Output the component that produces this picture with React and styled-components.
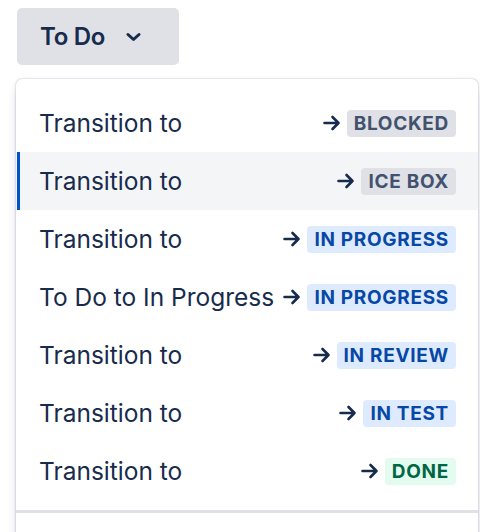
import styled, { createGlobalStyle } from "styled-components";

const GlobalStyle = createGlobalStyle`
  body {
    margin: 0;
    background: #ffffff;
    font-family: Inter, "Noto Sans", sans-serif;
    color: #172B4D;
    overflow: hidden;
  }
`

const Page = styled.div`
  padding: 8px 0 0 17px;
  height: 532px;
  box-sizing: border-box;
`

const StatusButton = styled.button`
  display: flex;
  align-items: center;
  width: 162px;
  height: 57px;
  padding: 0 0 0 23px;
  border: none;
  border-radius: 5px;
  background: #DFE1E6;
  color: #172B4D;
  font-family: inherit;
  font-size: 24px;
  font-weight: 600;
  letter-spacing: -0.3px;
  cursor: pointer;

  & svg {
    margin-left: 21px;
  }
`

const Menu = styled.div`
  margin: 14px 0 0 -1px;
  width: 462px;
  background: #ffffff;
  border-radius: 6px;
  box-shadow: 0 6px 12px -3px rgba(9, 30, 66, 0.25), 0 0 2px rgba(9, 30, 66, 0.35);
  padding-top: 15px;
  height: 460px;
`

const Row = styled.div`
  display: flex;
  align-items: center;
  justify-content: space-between;
  height: 58px;
  padding: 0 22px 0 23px;
  position: relative;
  background: ${(p) => (p.$active ? "#F4F5F7" : "transparent")};

  &::before {
    content: "";
    position: absolute;
    left: 1px;
    top: 0;
    bottom: 0;
    width: 3px;
    background: ${(p) => (p.$active ? "#0052CC" : "transparent")};
  }
`

const Label = styled.span`
  font-size: 24.5px;
  white-space: nowrap;
`

const Target = styled.span`
  display: flex;
  align-items: center;
  gap: 6px;
`

const Lozenge = styled.span`
  display: inline-flex;
  align-items: center;
  height: 27px;
  padding: 0 7px;
  border-radius: 4px;
  font-size: 19px;
  font-weight: 700;
  letter-spacing: 0.7px;
  text-transform: uppercase;
  background: ${(p) => p.$bg};
  color: ${(p) => p.$fg};
`

const Divider = styled.div`
  height: 3px;
  background: #DFE1E6;
  margin-top: 10px;
`

const tones = {
  grey: { bg: "#DFE1E6", fg: "#42526E" },
  blue: { bg: "#DEEBFF", fg: "#0747A6" },
  green: { bg: "#E3FCEF", fg: "#006644" },
}

const transitions = [
  { label: "Transition to", status: "Blocked", tone: "grey" },
  { label: "Transition to", status: "Ice box", tone: "grey", active: true },
  { label: "Transition to", status: "In progress", tone: "blue" },
  { label: "To Do to In Progress", status: "In progress", tone: "blue" },
  { label: "Transition to", status: "In review", tone: "blue" },
  { label: "Transition to", status: "In test", tone: "blue" },
  { label: "Transition to", status: "Done", tone: "green" },
]

function Arrow() {
  return (
    <svg width="18" height="16" viewBox="0 0 18 16" fill="none">
      <path d="M1.5 8h14M9.5 2l6 6-6 6" stroke="#172B4D" strokeWidth="2.6" strokeLinecap="round" strokeLinejoin="round" />
    </svg>
  )
}

function Chevron() {
  return (
    <svg width="15" height="10" viewBox="0 0 15 10" fill="none">
      <path d="M2 2.5l5.5 5 5.5-5" stroke="#172B4D" strokeWidth="3" strokeLinecap="round" strokeLinejoin="round" />
    </svg>
  )
}

export default function App() {
  return (
    <Page>
      <GlobalStyle />
      <StatusButton>
        To Do
        <Chevron />
      </StatusButton>
      <Menu>
        {transitions.map((t, i) => (
          <Row key={i} $active={t.active}>
            <Label>{t.label}</Label>
            <Target>
              <Arrow />
              <Lozenge $bg={tones[t.tone].bg} $fg={tones[t.tone].fg}>{t.status}</Lozenge>
            </Target>
          </Row>
        ))}
        <Divider />
      </Menu>
    </Page>
  )
}
